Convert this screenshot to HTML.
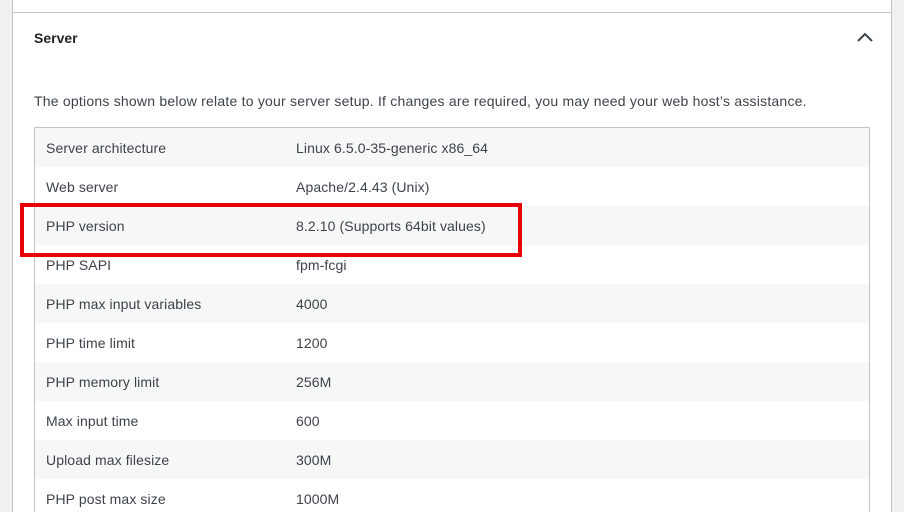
<!DOCTYPE html>
<html><head><style>
html,body{margin:0;width:904px;height:512px;overflow:hidden}
body{background:#f0f0f1;font-family:"Liberation Sans",sans-serif;color:#3c434a;position:relative}
.panel{position:absolute;left:12px;top:0;width:878px;height:512px;background:#fff;border-left:1px solid #c3c4c7;border-right:1px solid #c3c4c7;overflow:hidden}
.hline{position:absolute;left:0;right:0;top:12px;border-top:1px solid #c3c4c7}
h2{position:absolute;left:21px;top:30px;margin:0;font-size:14px;font-weight:bold;color:#1d2327}
.chev{position:absolute;left:843px;top:31px}
p{position:absolute;left:21px;top:93px;margin:0;font-size:14px;white-space:nowrap;letter-spacing:0.22px}
table{position:absolute;left:21px;top:127px;width:836px;border:1px solid #c3c4c7;border-collapse:collapse;font-size:14px;letter-spacing:0.1px}
td{height:39px;padding:0 0 0 11px;vertical-align:middle}
td.l{width:239px}
tr:nth-child(odd){background:#f6f7f7}
.red{position:absolute;left:20px;top:203px;width:494px;height:46px;border:4px solid #e8000b}
</style></head><body>
<div class="panel">
<div class="hline"></div>
<h2>Server</h2>
<svg class="chev" width="18" height="12" viewBox="0 0 18 12"><path d="M2 10 L9 3 L16 10" fill="none" stroke="#3c434a" stroke-width="2"/></svg>
<p>The options shown below relate to your server setup. If changes are required, you may need your web host’s assistance.</p>
<table>
<tr><td class="l">Server architecture</td><td>Linux 6.5.0-35-generic x86_64</td></tr>
<tr><td class="l">Web server</td><td>Apache/2.4.43 (Unix)</td></tr>
<tr><td class="l">PHP version</td><td>8.2.10 (Supports 64bit values)</td></tr>
<tr><td class="l">PHP SAPI</td><td>fpm-fcgi</td></tr>
<tr><td class="l">PHP max input variables</td><td>4000</td></tr>
<tr><td class="l">PHP time limit</td><td>1200</td></tr>
<tr><td class="l">PHP memory limit</td><td>256M</td></tr>
<tr><td class="l">Max input time</td><td>600</td></tr>
<tr><td class="l">Upload max filesize</td><td>300M</td></tr>
<tr><td class="l">PHP post max size</td><td>1000M</td></tr>
<tr><td class="l">&nbsp;</td><td></td></tr>
</table>
</div>
<div class="red"></div>
</body></html>
